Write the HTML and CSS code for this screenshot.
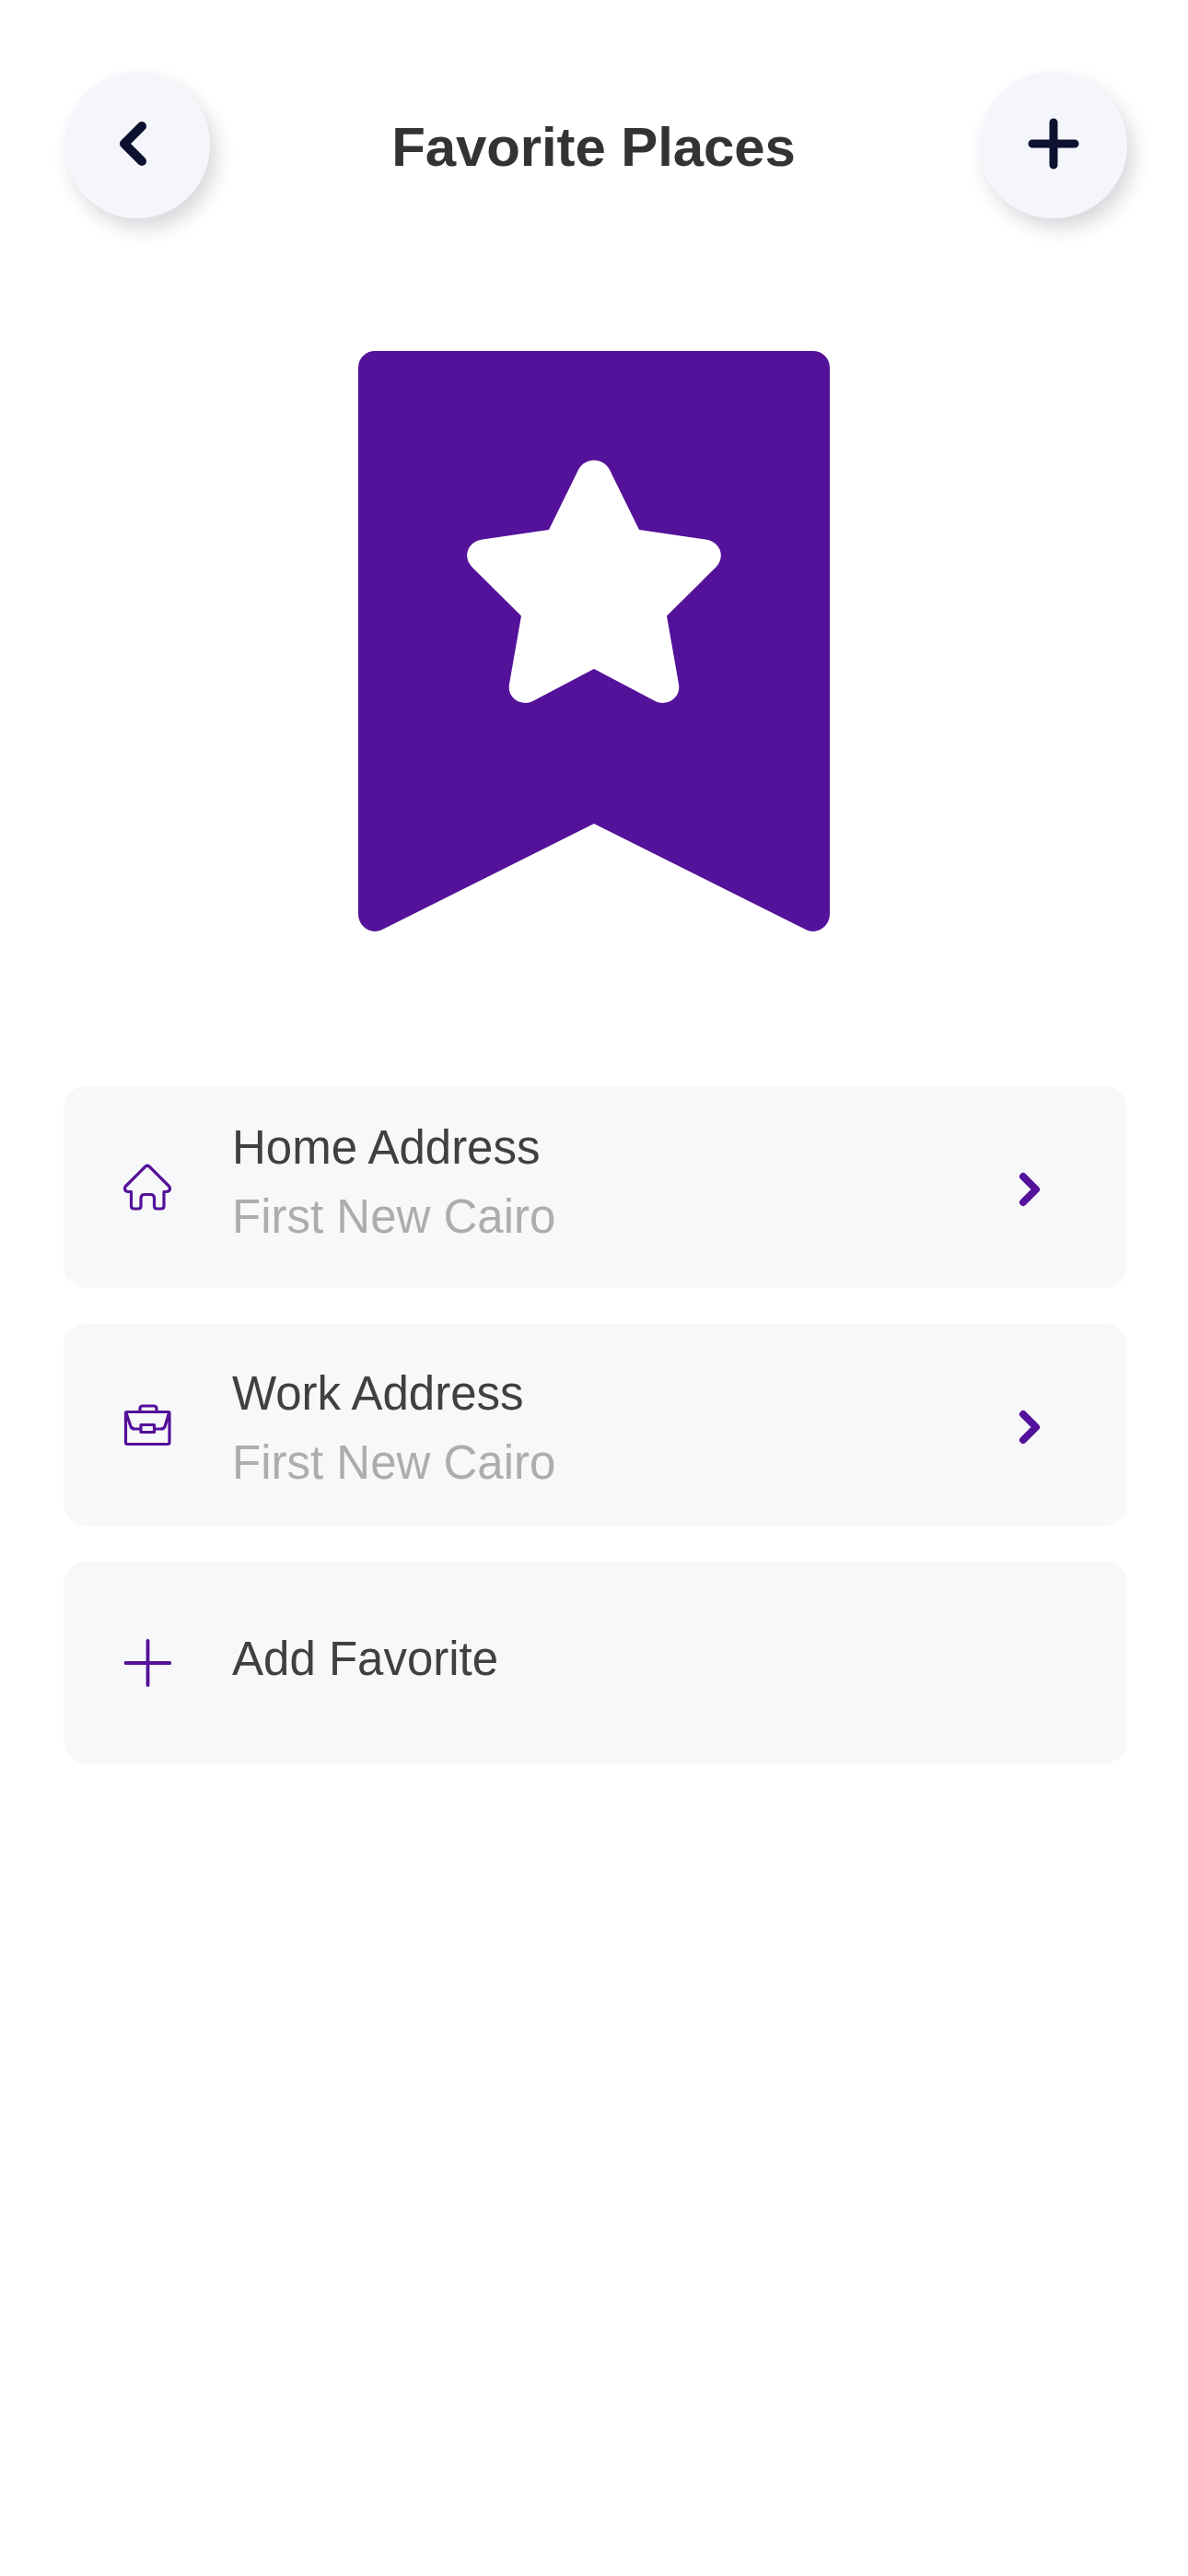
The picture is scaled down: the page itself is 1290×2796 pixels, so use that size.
FILE: index.html
```html
<!DOCTYPE html>
<html lang="en">
<head>
<meta charset="utf-8">
<title>Favorite Places</title>
<link rel="stylesheet" href="styles.css">
</head>
<body>
<main class="page">
  <header class="topbar">
    <button class="round-btn" type="button" aria-label="Back">
      <svg class="back-icon" viewBox="0 0 36 56" width="36" height="56"><path d="M26 9 L7 28 L26 47"/></svg>
    </button>
    <h1 class="title">Favorite Places</h1>
    <button class="round-btn round-btn-wide" type="button" aria-label="Add">
      <svg class="add-icon" viewBox="0 0 60 60" width="60" height="60"><path d="M30 7 V53 M7 30 H53"/></svg>
    </button>
  </header>

  <div class="hero">
    <svg class="bookmark" viewBox="0 0 512 630" width="512" height="630">
      <path class="bookmark-body" d="M18 0 H494 A18 18 0 0 1 512 18 V611 C512 625 498 634 486 628 L256 513 L26 628 C14 634 0 625 0 611 V18 A18 18 0 0 1 18 0 Z"/>
      <path class="bookmark-star" d="M239 129 C246 115 266 115 273 129 L305 194 L377 204.5 C394 207 399 224 388 235 L335 287.5 L348 361.5 C351 378 333 387 320.5 379 L256 345 L191.5 379 C179 387 161 378 164 361.5 L177 287.5 L124 235 C113 224 118 207 135 204.5 L207 194 Z"/>
    </svg>
  </div>

  <section class="places">
    <a class="place">
      <svg class="place-icon" viewBox="0 0 52 52" width="52" height="52"><path d="M24 3 Q26 1.500 28 3 L49.500 24.500 Q51.500 27 49.500 29.500 Q48.500 30.500 46.500 30.500 H44 V46 Q44 49 41 49 H36.500 Q33.500 49 33.500 46 V37.500 Q33.500 33.500 29.500 33.500 H23 Q19 33.500 19 37.500 V46 Q19 49 16 49 H11.500 Q8.500 49 8.500 46 V30.500 H5.500 Q3.500 30.500 2.500 29.500 Q0.500 27 2.500 24.500 Z"/></svg>
      <div class="place-text place-text-home">
        <div class="place-name">Home Address</div>
        <div class="place-sub">First New Cairo</div>
      </div>
      <svg class="chevron" viewBox="0 0 24 38" width="24" height="38"><path d="M5 5 L19 19 L5 33"/></svg>
    </a>
    <a class="place">
      <svg class="place-icon" viewBox="0 0 52 52" width="52" height="52"><path d="M4 11.500 H49 Q50 11.500 50 12.500 V44.500 Q50 46.500 48 46.500 H4.500 Q2.500 46.500 2.500 44.500 V12.500 Q2.500 11.500 4 11.500 Z M18 11.500 V8 Q18 5 21 5 H33 Q36 5 36 8 V11.500 M3 12.500 L7.500 26 Q8.500 30 12.500 30 H19 M33.500 30 H40.500 Q44.500 30 45.500 26 L49.500 12.500 M19 25.500 H33.500 V33.500 H19 Z"/></svg>
      <div class="place-text place-text-work">
        <div class="place-name">Work Address</div>
        <div class="place-sub">First New Cairo</div>
      </div>
      <svg class="chevron" viewBox="0 0 24 38" width="24" height="38"><path d="M5 5 L19 19 L5 33"/></svg>
    </a>
    <a class="place">
      <svg class="place-icon place-icon-plus" viewBox="0 0 52 52" width="52" height="52"><path d="M26.500 2 V50 M2.500 26 H50.500"/></svg>
      <div class="place-text place-text-add">
        <div class="place-name">Add Favorite</div>
      </div>
    </a>
  </section>
</main>
</body>
</html>
```

FILE: styles.css
```css
* {
  box-sizing: border-box;
}

html,
body {
  margin: 0;
  padding: 0;
  background: #ffffff;
}

body {
  font-family: "Liberation Sans", Arial, sans-serif;
}

.page {
  width: 1290px;
  min-height: 2796px;
  padding-top: 78px;
}

.topbar {
  display: flex;
  align-items: center;
  padding: 0 66px 0 70px;
}

.round-btn {
  flex: none;
  display: flex;
  align-items: center;
  justify-content: center;
  width: 158px;
  height: 159px;
  padding: 0;
  border: 0;
  border-radius: 50%;
  background: #f5f6fc;
  box-shadow: 7px 11px 20px rgba(30, 30, 50, 0.17);
}

.round-btn-wide {
  width: 161px;
}

.back-icon {
  margin: -4px 7px 0 0;
  fill: none;
  stroke: #0d1130;
  stroke-width: 10;
  stroke-linecap: round;
  stroke-linejoin: round;
}

.add-icon {
  margin-top: -3px;
  fill: none;
  stroke: #0d1130;
  stroke-width: 9;
  stroke-linecap: round;
}

.title {
  flex: 1;
  margin: 0 2px 0 0;
  padding-top: 3px;
  font-size: 60px;
  font-weight: 700;
  line-height: 69px;
  letter-spacing: -0.1px;
  text-align: center;
  color: #333333;
}

.hero {
  display: flex;
  justify-content: center;
  margin-top: 144px;
}

.bookmark {
  display: block;
}

.bookmark-body {
  fill: #54119a;
}

.bookmark-star {
  fill: #ffffff;
}

.places {
  display: flex;
  flex-direction: column;
  gap: 39px;
  margin: 168px 66px 0 69px;
}

.place {
  display: flex;
  align-items: center;
  height: 219px;
  padding: 0 94px 0 65px;
  border-radius: 24px;
  background: #f7f8fa;
}

.place-icon {
  flex: none;
  fill: none;
  stroke: #54119a;
  stroke-width: 3.2;
  stroke-linecap: round;
  stroke-linejoin: round;
}

.place-icon-plus {
  stroke-width: 3.8;
}

.place-text {
  flex: 1;
  margin-left: 66px;
  font-size: 51px;
  line-height: 75px;
}

.place-text-home {
  padding-bottom: 11px;
}

.place-text-work {
  padding-top: 6px;
}

.place-text-add {
  padding-bottom: 9px;
}

.place-name {
  color: #404040;
}

.place-sub {
  color: #adadad;
}

.chevron {
  flex: none;
  margin-top: 4px;
  fill: none;
  stroke: #54119a;
  stroke-width: 8;
  stroke-linecap: round;
  stroke-linejoin: round;
}
```
